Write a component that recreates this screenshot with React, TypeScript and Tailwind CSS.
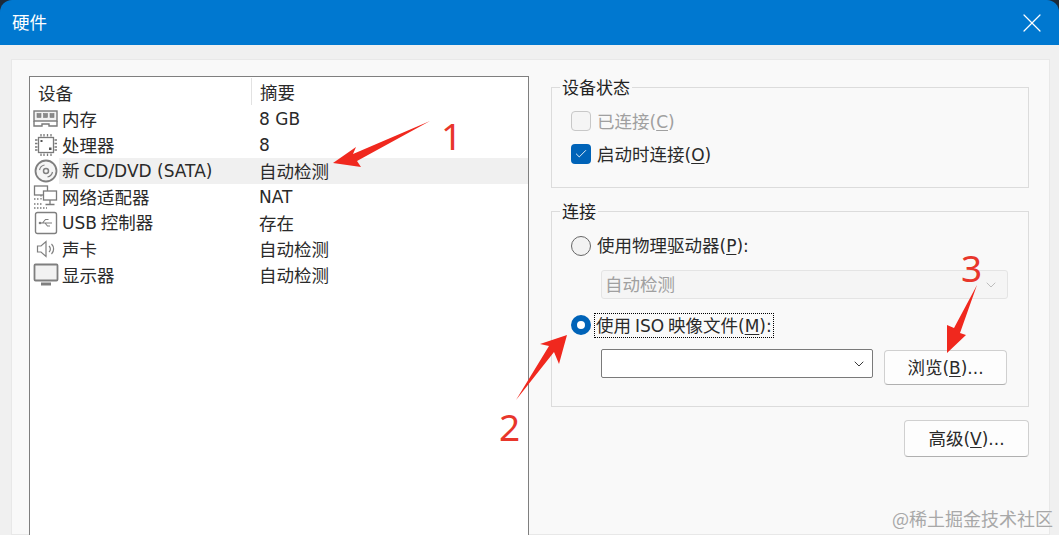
import { Check, ChevronDown, X } from "lucide-react";
import type React from "react";

const uiFont = "font-['Noto_Sans_CJK_SC','Noto_Sans',sans-serif]";

// latin parts of the labels run in a wider face than the CJK text
const L = ({ children }: { children: React.ReactNode }) => (
	<span className="font-['DejaVu_Sans',sans-serif] text-[17px]">{children}</span>
);

const RamIcon = () => (
	<svg width="26" height="18" viewBox="0 0 26 18" fill="none" stroke="#7a7a7a" strokeWidth="1.4">
		<rect x="1" y="1" width="23" height="10" fill="#f2f2f2" />
		<rect x="4" y="3.5" width="4" height="4" fill="#8a8a8a" strokeWidth="0.6" />
		<rect x="10.5" y="3.5" width="4" height="4" fill="#8a8a8a" strokeWidth="0.6" />
		<rect x="17" y="3.5" width="4" height="4" fill="#8a8a8a" strokeWidth="0.6" />
		<path d="M1 11v5h8v-2h7v2h8v-5" />
	</svg>
);

const CpuIcon = () => (
	<svg width="24" height="24" viewBox="0 0 24 24" fill="none" stroke="#7a7a7a" strokeWidth="1.3">
		<rect x="4.5" y="4.5" width="15" height="15" />
		<path d="M7 1v2.500M10 1v2.500M13.500 1v2.500M17 1v2.500M7 20.500v2.500M10 20.500v2.500M13.500 20.500v2.500M17 20.500v2.500M1 7h2.500M1 10.500h2.500M1 14h2.500M1 17h2.500M20.500 7h2.500M20.500 10.500h2.500M20.500 14h2.500M20.500 17h2.500" />
		<rect x="6.500" y="7" width="2" height="2" fill="#555" stroke="none" />
		<rect x="15" y="14.500" width="2.500" height="2.500" fill="#555" stroke="none" />
	</svg>
);

const DiscIcon = () => (
	<svg width="24" height="24" viewBox="0 0 24 24" fill="none" stroke="#7f7f7f" strokeWidth="1.800">
		<circle cx="12" cy="12" r="10.500" fill="#f5f5f5" />
		<circle cx="12" cy="12" r="2.500" strokeWidth="1.500" />
		<path d="M5.500 11a6.500 6.500 0 0 1 5-5M18.500 13a6.500 6.500 0 0 1-5 5" strokeWidth="1.200" />
	</svg>
);

const NetworkIcon = () => (
	<svg width="26" height="24" viewBox="0 0 26 24" fill="none" stroke="#7a7a7a" strokeWidth="1.300">
		<rect x="1.500" y="1" width="13" height="9" fill="#fff" />
		<rect x="10.500" y="6" width="13" height="9" fill="#fff" />
		<path d="M17 15v4M12.500 19.500h9" />
		<path d="M8 10v5M1 14h5M1 19h9M1 23h13" strokeDasharray="1.500 1.500" />
	</svg>
);

const UsbIcon = () => (
	<svg width="24" height="24" viewBox="0 0 24 24" fill="none" stroke="#7f7f7f" strokeWidth="1.400">
		<rect x="1.500" y="1.500" width="21" height="21" rx="2" />
		<path d="M5.500 12h12.500M8.500 12l3-3.500h3M11 12l2.500 3h2.500" strokeWidth="1.100" />
		<circle cx="6" cy="12" r="1.300" fill="#7f7f7f" stroke="none" />
	</svg>
);

const SpeakerIcon = () => (
	<svg width="20" height="20" viewBox="0 0 20 20" fill="none" stroke="#7f7f7f" strokeWidth="1.200">
		<path d="M1.500 7h3.500l5-4.500v15l-5-4.500h-3.500z" />
		<path d="M13 7a4 4 0 0 1 0 6M15.500 5a7 7 0 0 1 0 10" />
	</svg>
);

const MonitorIcon = () => (
	<svg width="26" height="24" viewBox="0 0 26 24" fill="none" stroke="#7f7f7f" strokeWidth="1.800">
		<rect x="1.500" y="1.500" width="23" height="16" rx="1" fill="#f2f2f2" />
		<path d="M8 21h10" strokeWidth="3" />
	</svg>
);

interface DeviceRow {
	icon: React.ReactNode;
	name: React.ReactNode;
	summary: React.ReactNode;
	selected?: boolean;
}

const devices: DeviceRow[] = [
	{ icon: <RamIcon />, name: "内存", summary: <L>8 GB</L> },
	{ icon: <CpuIcon />, name: "处理器", summary: <L>8</L> },
	{ icon: <DiscIcon />, name: <>新 <L>CD/DVD (SATA)</L></>, summary: "自动检测", selected: true },
	{ icon: <NetworkIcon />, name: "网络适配器", summary: <L>NAT</L> },
	{ icon: <UsbIcon />, name: <><L>USB</L> 控制器</>, summary: "存在" },
	{ icon: <SpeakerIcon />, name: "声卡", summary: "自动检测" },
	{ icon: <MonitorIcon />, name: "显示器", summary: "自动检测" },
];

const Key = ({ k }: { k: string }) => (
	<L>
		(<span className="underline underline-offset-2">{k}</span>)
	</L>
);

const Group = ({ title, className, children }: { title: string; className: string; children: React.ReactNode }) => (
	<fieldset className={`border border-[#dcdcdc] ${className}`}>
		<legend className="ml-2 px-[2px] text-[17px] leading-6 text-[#222]">{title}</legend>
		<div className="pl-[19px]">{children}</div>
	</fieldset>
);

const Annotations = () => (
	<svg className="absolute top-0 left-0" width="1059" height="535" fill="#f0281e">
		<polygon points="333,163 356,147 353,154 430,121 357,161 361,167" />
		<polygon points="567,335 559,364 554,352 516,400 549,346 540,344" />
		<polygon points="947,353 947,325 954,328 977,285 960,333 966,335" />
	</svg>
);

export default function App() {
	return (
		<div className={`relative h-[535px] w-[1059px] overflow-hidden bg-[#f0f0f0] ${uiFont}`}>
			<div className="bg-[#1d2b3a]">
				<div className="flex h-[45px] items-center justify-between rounded-t-xl bg-[#0078d0] pr-[11px] pl-3 text-white">
					<span className="text-[17.5px]">硬件</span>
					<X size={32} strokeWidth={0.9} />
				</div>
			</div>
			<div className="mt-[14px] ml-[11px] flex h-[476px] w-[1039px] gap-[22px] border border-[#e8e8e8] bg-[#f9f9f9] pt-[15px] pl-[17px]">
				<div className="mt-px h-[470px] w-[500px] border border-[#7f7f7f] bg-white text-[17.5px] text-[#2a2a2a]">
					<div className="flex h-[29px] items-center">
						<span className="w-[222px] border-r border-[#e2e2e2] pl-2 leading-[27px]">
							<span className="relative top-px">设备</span>
						</span>
						<span className="relative top-px pl-2">摘要</span>
					</div>
					{devices.map((d, idx) => (
						<div key={idx} className="flex h-[26px] items-center">
							<div className="flex h-full w-[29px] shrink-0 items-center justify-center pl-[3px]">{d.icon}</div>
							<div className={`flex h-full flex-1 items-center ${d.selected ? "bg-[#f0f0f0]" : ""}`}>
								<span className="w-[198px] pl-[3px] whitespace-nowrap">{d.name}</span>
								<span className="pl-[2px]">{d.summary}</span>
							</div>
						</div>
					))}
				</div>

				<div className="flex w-[478px] flex-col text-[17.5px] text-[#2a2a2a]">
					<Group title="设备状态" className="h-[113px]">
						<div className="mt-[9px] flex h-[26px] items-center gap-[6px] text-[#a0a0a0]">
							<span className="h-5 w-5 rounded-[4px] border border-[#c8c8c8] bg-[#f5f5f5]" />
							<span className="relative top-px">已连接<Key k="C" /></span>
						</div>
						<div className="mt-[7px] flex h-[26px] items-center gap-[6px]">
							<span className="flex h-5 w-5 items-center justify-center rounded-[4px] bg-[#0063b8] text-white">
								<Check size={14} strokeWidth={1.5} />
							</span>
							<span className="relative top-px">启动时连接<Key k="O" /></span>
						</div>
					</Group>

					<Group title="连接" className="mt-[11px] h-[208px]">
						<div className="mt-[10px] flex h-[26px] items-center gap-[6px]">
							<span className="h-5 w-5 rounded-full border border-[#666] bg-[#f2f2f2]" />
							<span>使用物理驱动器<Key k="P" /><L>:</L></span>
						</div>
						<div className="mt-[11px] ml-[30px] flex h-[29px] w-[407px] items-center justify-between rounded-[3px] border border-[#e4e4e4] bg-[#f5f5f5] pr-2 pl-[3px] text-[#a0a0a0]">
							<span>自动检测</span>
							<ChevronDown size={16} strokeWidth={1} />
						</div>
						<div className="mt-[13px] flex h-[26px] items-center gap-[3px]">
							<span className="flex h-5 w-5 items-center justify-center rounded-full border-[6px] border-[#0063b8] bg-white" />
							<span className="border border-dotted border-black px-px leading-[22px]">使用 <L>ISO</L> 映像文件<Key k="M" /><L>:</L></span>
						</div>
						<div className="mt-[11px] ml-[30px] flex items-start gap-[11px]">
							<div className="flex h-[29px] w-[272px] items-center justify-end rounded-[2px] border border-[#7a7a7a] bg-white pr-[5px]">
								<ChevronDown size={16} strokeWidth={1.4} />
							</div>
							<button className="mt-px h-[35px] w-[123px] rounded-[4px] border border-[#d0d0d0] border-b-[#b0b0b0] bg-[#fdfdfd] text-center">
								浏览<Key k="B" /><L>...</L>
							</button>
						</div>
					</Group>

					<button className="mt-[13px] h-[37px] w-[125px] self-end rounded-[4px] border border-[#d0d0d0] border-b-[#b0b0b0] bg-[#fdfdfd] text-center">
						高级<Key k="V" /><L>...</L>
					</button>
				</div>
			</div>

			<Annotations />
			<span className="absolute top-[112px] left-[441px] font-['Noto_Sans',sans-serif] text-[37px] leading-[48px] text-[#e8362b]">1</span>
			<span className="absolute top-[403px] left-[499px] font-['Noto_Sans',sans-serif] text-[37px] leading-[48px] text-[#e8362b]">2</span>
			<span className="absolute top-[244px] left-[961px] font-['Noto_Sans',sans-serif] text-[37px] leading-[48px] text-[#e8362b]">3</span>
			<span className="absolute right-[6px] bottom-[5px] text-[18px] leading-6 text-[#a8a8a8]">@稀土掘金技术社区</span>
		</div>
	);
}
